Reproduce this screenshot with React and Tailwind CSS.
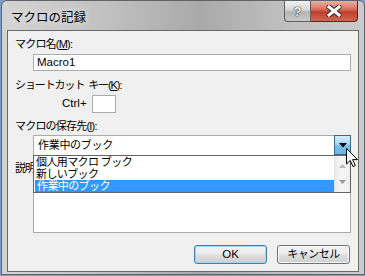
export default function App() {
  const jp = "font-['Liberation_Sans','Noto_Sans_CJK_JP',sans-serif]";
  return (
    <div className={`w-[365px] h-[276px] overflow-hidden bg-[#7d9cc8] ${jp}`}>
      <div className="w-[364px] h-[275px] ml-px flex flex-col rounded-t-[6px] border border-[#5d6470] bg-[linear-gradient(90deg,#d4d4d4_0%,#c4c4c4_25%,#b2b2b2_45%,#a9a9a9_55%,#bdbdbd_75%,#cbcbcb_100%)]">
        {/* title bar */}
        <div className="h-[29px] flex items-start">
          <div className="ml-[9px] mt-[8px] text-[12.5px] leading-[16px] text-black [text-shadow:0_0_6px_rgba(255,255,255,0.8)] font-['Noto_Sans_CJK_JP',sans-serif]">
            マクロの記録
          </div>
          <div className="ml-auto mr-[6px] flex">
            <div className="w-[27px] h-[21px] border border-t-0 border-[#5f5f5f] rounded-bl-[4px] bg-[linear-gradient(180deg,#f2f2f2_0%,#d6d6d6_45%,#b4b4b4_55%,#c9c9c9_100%)] flex items-center justify-center">
              <span className="text-[13px] leading-none font-bold text-white font-['Liberation_Sans',sans-serif] [text-shadow:0_0_1px_#222,0_0_1px_#222,0_0_1px_#222]">?</span>
            </div>
            <div className="w-[47px] h-[21px] border border-t-0 border-l-0 border-[#4d2a24] rounded-br-[4px] bg-[linear-gradient(180deg,#eab0a2_0%,#d87462_40%,#c23f2c_55%,#cf6652_100%)] flex items-center justify-center">
              <svg width="16" height="12" viewBox="0 0 16 12">
                <path d="M3 2 L13 10 M13 2 L3 10" stroke="#3a2622" strokeWidth="5" strokeLinecap="round" />
                <path d="M3 2 L13 10 M13 2 L3 10" stroke="#ffffff" strokeWidth="3" strokeLinecap="square" />
              </svg>
            </div>
          </div>
        </div>
        {/* client area */}
        <div className="mx-[5px] h-[242px] border border-[#6a6a6a] bg-[#f0f0f0] pl-[7px] pr-[7px] text-[11px] text-black flex flex-col">
          <div className="mt-[6px] h-[14px] leading-[14px] tracking-[-0.8px]">
            マクロ名(<span className="underline">M</span>):
          </div>
          <div className="ml-[18px] mt-[3px] h-[17px] border border-[#ababab] bg-white flex items-center pl-[3px] text-[11.5px]">
            Macro1
          </div>
          <div className="mt-[7px] h-[14px] leading-[14px] tracking-[-1.1px] whitespace-pre">
            ショートカット  キー(<span className="underline">K</span>):
          </div>
          <div className="mt-[3px] flex items-center">
            <span className="ml-[47px] text-[11.5px]">Ctrl+</span>
            <div className="ml-[5px] w-[24px] h-[18px] border border-[#ababab] bg-white" />
          </div>
          <div className="mt-[6px] h-[14px] leading-[14px] tracking-[-0.8px]">
            マクロの保存先(<span className="underline">I</span>):
          </div>
          <div className="ml-[18px] mt-[2px] relative">
            <div className="h-[20px] border border-[#ababab] border-b-0 bg-white flex items-center pl-[4px]">
              <span className="tracking-[-0.3px]">作業中のブック</span>
              <div className="ml-auto w-[17px] h-[20px] -mr-px -mt-px border border-[#3c6a8c] bg-[linear-gradient(180deg,#d6eefb_0%,#a6d5f2_45%,#79bde6_55%,#6cb6e3_100%)] flex items-center justify-center">
                <svg width="8" height="5" viewBox="0 0 8 5"><path d="M0 0 H8 L4 4.5 Z" fill="#000" /></svg>
              </div>
            </div>
            {/* dropdown list */}
            <div className="absolute left-0 top-full w-full h-[38px] border border-[#646464] bg-white flex z-10">
              <div className="flex-1 flex flex-col leading-[12px] pl-px tracking-[-0.6px]">
                <div className="h-[12px] pl-[1px]">個人用マクロ ブック</div>
                <div className="h-[12px] pl-[1px]">新しいブック</div>
                <div className="h-[12px] pl-[1px] bg-[#3399ff] text-white border border-dotted border-[#c8661c] leading-[10px]">作業中のブック</div>
              </div>
              <div className="w-[16px] bg-[linear-gradient(90deg,#eaeaea,#f6f6f6_40%,#ececec)] border-l border-[#e2e2e2] flex flex-col items-center justify-between py-[8px]">
                <svg width="7" height="4" viewBox="0 0 7 4"><path d="M0 4 L3.5 0 L7 4 Z" fill="#b8b8b8" /></svg>
                <svg width="7" height="4" viewBox="0 0 7 4"><path d="M0 0 H7 L3.5 4 Z" fill="#9a9a9a" /></svg>
              </div>
            </div>
            {/* cursor */}
            <svg className="absolute z-20 left-[313px] top-[13px]" width="12" height="20" viewBox="0 0 12 20">
              <path d="M0.5 0.5 L0.5 16 L4.2 12.4 L7 18.6 L9.3 17.6 L6.6 11.6 L11.5 11.6 Z" fill="#fff" stroke="#000" strokeWidth="1" strokeLinejoin="round" />
            </svg>
          </div>
          <div className="mt-[6px] h-[14px] leading-[14px] whitespace-nowrap tracking-[-1px]">
            説明(<span className="underline">D</span>):
          </div>
          <div className="ml-[18px] mt-px h-[57px] border border-[#ababab] bg-white" />
          <div className="mt-[12px] flex justify-end gap-[10px] pr-px">
            <div className="w-[73px] h-[19px] rounded-[3px] border border-[#3c7fb1] shadow-[inset_0_0_0_1px_#9fd6f8] bg-[linear-gradient(180deg,#f2f2f2_0%,#ebebeb_45%,#dddddd_55%,#cfcfcf_100%)] flex items-center justify-center text-[11.5px]">
              OK
            </div>
            <div className="w-[73px] h-[19px] rounded-[3px] border border-[#707070] shadow-[inset_0_0_0_1px_#fcfcfc] bg-[linear-gradient(180deg,#f2f2f2_0%,#ebebeb_45%,#dddddd_55%,#cfcfcf_100%)] flex items-center justify-center tracking-[-0.5px]">
              キャンセル
            </div>
          </div>
        </div>
      </div>
    </div>
  );
}
